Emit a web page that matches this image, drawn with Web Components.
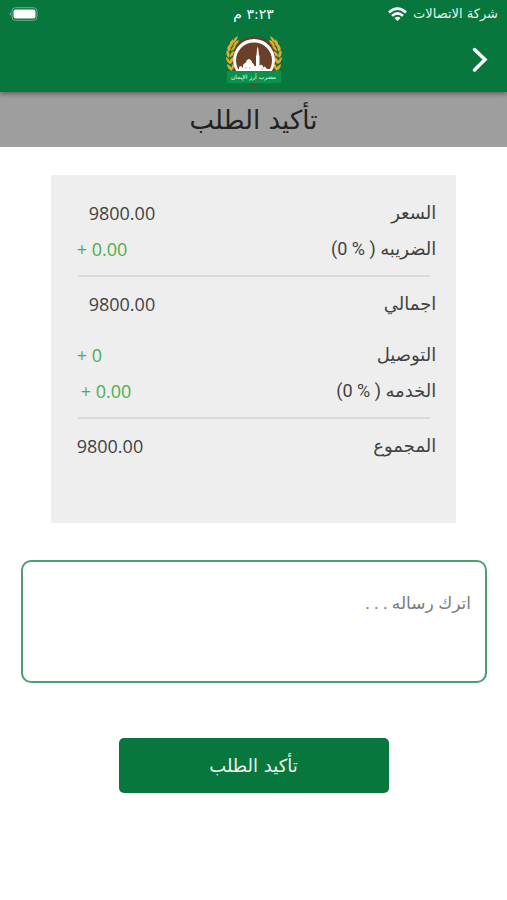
<!DOCTYPE html>
<html lang="ar" dir="rtl">
<head>
<meta charset="utf-8">
<meta name="viewport" content="width=device-width, initial-scale=1">
<title>تأكيد الطلب</title>
<style>
  body { margin: 0; background: #fff; color: #424242; font-family: "Open Sans", "DejaVu Sans", sans-serif; }
</style>
</head>
<body>
<order-page></order-page>
<script>
const define = (name, html, setup) => customElements.define(name, class extends HTMLElement {
  constructor() {
    super();
    this.attachShadow({ mode: 'open' }).innerHTML = html;
  }
  connectedCallback() { if (setup) setup(this, this.shadowRoot); }
});

define('status-bar', `
<style>
  :host { display: grid; grid-template-columns: 1fr auto 1fr; align-items: center; height: 28px; padding: 0 9px; color: #e6f2eb; font: 13px/28px "DejaVu Sans", sans-serif; }
  .net { display: flex; align-items: center; gap: 6px; }
  .time { font-size: 14px; color: #fff; }
  .battery { justify-self: end; display: block; }
</style>
<div class="net"><span>شركة الاتصالات</span>
<svg width="19" height="15" viewBox="0 0 19 15" fill="none" stroke="#fff" stroke-width="2.6"><path d="M1 5.4Q9.500-2 18 5.400"/><path d="M4 8.900Q9.500 4 15 8.900"/><path d="M9.500 14L6.500 11Q9.500 8.500 12.500 11Z" fill="#fff" stroke="none"/></svg></div>
<span class="time">٣:٢٣ م</span>
<svg class="battery" width="30" height="14" viewBox="0 0 30 14"><rect x="3" y=".7" width="25" height="12.600" rx="3.500" fill="none" stroke="#6fae8b"/><rect x="4.500" y="2.500" width="22" height="9" rx="2" fill="#fff"/><path d="M1.500 4.800Q-.3 7 1.500 9Z" fill="#8fc3a5"/></svg>`);

define('brand-logo', `
<style>
  :host { display: block; position: relative; width: 56px; height: 52px; }
  svg { display: block; }
  span { position: absolute; inset: 36px 1px auto 1px; height: 12px; background: #07934b; color: #e8f7ee; font: 6px/12px "DejaVu Sans", sans-serif; text-align: center; white-space: nowrap; }
</style>
<svg width="56" height="52" viewBox="0 0 56 52">
  <path d="M21 48Q28 52 35 48Z" fill="#8a3a22"/>
  <circle cx="28" cy="24" r="22.500" fill="#6b3d25"/>
  <circle cx="28" cy="25" r="21" fill="#fff"/>
  <circle cx="28" cy="25.500" r="18" fill="#6b4029"/>
  <g fill="#e9a92f">
    <path d="M12 1Q11 6 7 8Q7 3 12 1ZM7 4Q8 9 5 12Q2 8 7 4ZM4 9Q6 14 3 17Q-1 13 4 9ZM1 15Q5 19 3 23Q-1 20 1 15ZM0 22Q5 25 4 29Q0 27 0 22ZM1 29Q6 31 6 36Q1 34 1 29ZM13 5Q12 10 7 11Q8 6 13 5ZM10 10Q9 15 5 16Q6 11 10 10ZM8 16Q8 21 4 22Q4 17 8 16ZM7 22Q8 27 4 29Q3 24 7 22ZM8 28Q9 33 6 35Q4 31 8 28Z"/>
    <path transform="matrix(-1 0 0 1 56 0)" d="M12 1Q11 6 7 8Q7 3 12 1ZM7 4Q8 9 5 12Q2 8 7 4ZM4 9Q6 14 3 17Q-1 13 4 9ZM1 15Q5 19 3 23Q-1 20 1 15ZM0 22Q5 25 4 29Q0 27 0 22ZM1 29Q6 31 6 36Q1 34 1 29ZM13 5Q12 10 7 11Q8 6 13 5ZM10 10Q9 15 5 16Q6 11 10 10ZM8 16Q8 21 4 22Q4 17 8 16ZM7 22Q8 27 4 29Q3 24 7 22ZM8 28Q9 33 6 35Q4 31 8 28Z"/>
  </g>
  <path d="M10 37V34L13 34V32L15 31L17 33V30Q18 28 20 27.500Q20 25 22.500 24V22.500V24Q26 25 26 27.500Q28 28.500 28.500 31H30V21L30.500 20L31 14L31.700 11.500L32.400 14L32.900 20L33.500 21V31L35 29.500L37 31V32.500L39 31.500L41 34H45V37Z" fill="#fff"/>
  <path d="M20 34v-2M24 34v-2M36 35v-2" stroke="#b49a8b" stroke-width=".8"/>
</svg>
<span>مضرب أرز الإيمان</span>`);

define('app-header', `
<style>
  :host { display: block; position: relative; background: #07773d; box-shadow: 0 2px 5px rgba(0,0,0,.4); }
  .bar { display: grid; grid-template-columns: 1fr auto 1fr; align-items: center; height: 64px; padding: 0 12px; }
  brand-logo { align-self: start; margin-top: 7px; }
  button { justify-self: start; width: 30px; height: 44px; padding: 0; border: 0; background: none; display: grid; place-items: center; }
</style>
<status-bar></status-bar>
<div class="bar">
  <button type="button" aria-label="رجوع"><svg width="18" height="28" viewBox="0 0 18 28" fill="none" stroke="#fff" stroke-width="3.500" stroke-linecap="round"><path d="M3.500 3.500L14 13.500L3.500 24"/></svg></button>
  <brand-logo></brand-logo>
</div>`);

define('page-title', `
<style>
  :host { display: block; background: #9e9e9e; color: #212121; }
  h1 { margin: 0; padding-top: 2px; font: 400 26px/53px "DejaVu Sans", sans-serif; text-align: center; }
</style>
<h1><slot></slot></h1>`);

define('price-row', `
<style>
  :host { display: flex; justify-content: space-between; align-items: center; height: 36px; font-size: 18px; line-height: 36px; }
  span { font-family: Roboto, "DejaVu Sans", sans-serif; }
  bdi { direction: ltr; }
  :host([added]) bdi { color: #4caf50; }
  :host([indent="4"]) bdi { margin-left: 4px; }
  :host([indent="12"]) bdi { margin-left: 12px; }
</style>
<span><slot></slot></span><bdi></bdi>`, (host, root) => {
  root.querySelector('bdi').textContent = host.getAttribute('value');
});

define('price-summary', `
<style>
  :host { display: block; width: 80%; box-sizing: border-box; margin: 28px auto 0; padding: 20px 20px 59px 26px; background: #eee; }
  hr { height: 2px; margin: 8px 6px 9px 1px; border: 0; background: #dadada; }
  .group { margin-top: 15px; }
</style>
<price-row value="9800.00" indent="12">السعر</price-row>
<price-row value="+ 0.00" added>الضريبه ( % 0)</price-row>
<hr>
<price-row value="9800.00" indent="12">اجمالي</price-row>
<div class="group">
  <price-row value="+ 0" added>التوصيل</price-row>
  <price-row value="+ 0.00" indent="4" added>الخدمه ( % 0)</price-row>
</div>
<hr>
<price-row value="9800.00">المجموع</price-row>`);

define('message-box', `
<style>
  :host { display: block; margin: 37px 20px 0 21px; }
  textarea { display: block; box-sizing: border-box; width: 100%; height: 123px; padding: 27px 14px; border: 2px solid #4b9e75; border-radius: 10px; background: #fff; color: #424242; font: 17px/28px "Open Sans", "DejaVu Sans", sans-serif; resize: none; outline: 0; }
  textarea::placeholder { color: #7b7b7b; opacity: 1; }
</style>
<textarea aria-label="اترك رساله" placeholder="اترك رساله . . ."></textarea>`);

define('confirm-button', `
<style>
  :host { display: flex; justify-content: center; margin: 55px 20px 40px; }
  button { width: 270px; height: 55px; border: 0; border-radius: 5px; background: #07773d; color: #e9f5ee; font: 18px/36px "DejaVu Sans", sans-serif; }
</style>
<button type="button"><slot></slot></button>`);

define('order-page', `
<style>:host { display: block; }</style>
<app-header></app-header>
<main>
  <page-title>تأكيد الطلب</page-title>
  <price-summary></price-summary>
  <message-box></message-box>
  <confirm-button>تأكيد الطلب</confirm-button>
</main>`);
</script>
</body>
</html>
